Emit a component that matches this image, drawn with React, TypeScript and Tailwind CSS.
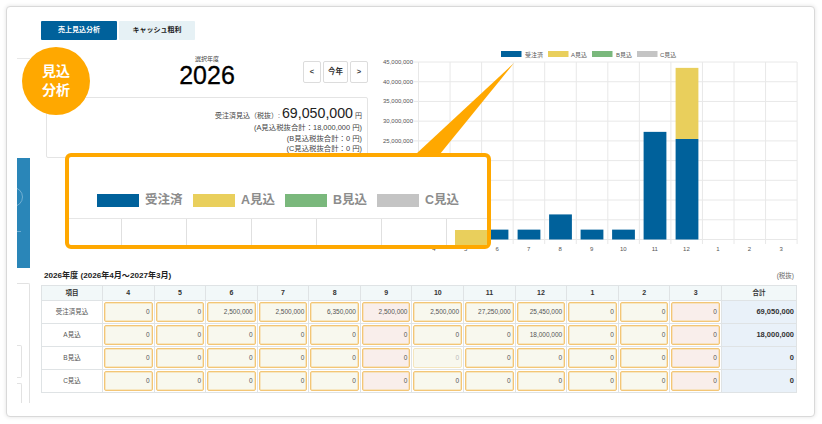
const font = { fontFamily: '"Liberation Sans", "Noto Sans CJK JP", sans-serif' };

const months = ['4', '5', '6', '7', '8', '9', '10', '11', '12', '1', '2', '3'];

const rows = [
  { label: '受注済見込', total: '69,050,000', values: ['0', '0', '2,500,000', '2,500,000', '6,350,000', '2,500,000', '2,500,000', '27,250,000', '25,450,000', '0', '0', '0'] },
  { label: 'A見込', total: '18,000,000', values: ['0', '0', '0', '0', '0', '0', '0', '0', '18,000,000', '0', '0', '0'] },
  { label: 'B見込', total: '0', values: ['0', '0', '0', '0', '0', '0', '0', '0', '0', '0', '0', '0'] },
  { label: 'C見込', total: '0', values: ['0', '0', '0', '0', '0', '0', '0', '0', '0', '0', '0', '0'] },
];

const BLUE = '#00619b';
const YELLOW = '#e9cf5c';
const axis = ['45,000,000', '40,000,000', '35,000,000', '30,000,000', '25,000,000', '20,000,000', '15,000,000', '10,000,000', '5,000,000', '0'];
const bars = [
  { x: 497, blue: 2.5, yellow: 0 },
  { x: 529, blue: 2.5, yellow: 0 },
  { x: 560.5, blue: 6.35, yellow: 0 },
  { x: 592, blue: 2.5, yellow: 0 },
  { x: 623.5, blue: 2.5, yellow: 0 },
  { x: 655, blue: 27.25, yellow: 0 },
  { x: 687, blue: 25.45, yellow: 18 },
];

function Chart() {
  const zero = 239.5;
  const perM = 3.95;
  const legend = [
    { x: 501, c: BLUE, t: '受注済', tx: 525 },
    { x: 548, c: YELLOW, t: 'A見込', tx: 571 },
    { x: 592, c: '#7ab87c', t: 'B見込', tx: 616 },
    { x: 637, c: '#c4c4c4', t: 'C見込', tx: 660 },
  ];
  return (
    <svg viewBox="380 40 420 230" className="w-[420px] h-[230px] shrink-0" style={font}>
      {legend.map((l) => (
        <g key={l.t}>
          <rect x={l.x} y={51} width={20.5} height={6} fill={l.c} />
          <text x={l.tx} y={56.5} fontSize={6} fill="#555">{l.t}</text>
        </g>
      ))}
      {axis.map((a, i) => {
        const y = 62 + i * 19.72;
        return (
          <g key={a}>
            <line x1={414} x2={797} y1={y} y2={y} stroke="#e8e8e8" />
            {a !== '0' && i < 5 && (
              <text x={413} y={y + 2} fontSize={6} fill="#555" textAnchor="end">{a}</text>
            )}
          </g>
        );
      })}
      {Array.from({ length: 13 }).map((_, i) => {
        const x = 418.5 + i * 31.55;
        return <line key={i} x1={x} x2={x} y1={62} y2={244} stroke="#e8e8e8" />;
      })}
      {bars.map((b) => (
        <g key={b.x}>
          <rect x={b.x - 11.4} y={zero - b.blue * perM} width={22.8} height={b.blue * perM} fill={BLUE} />
          {b.yellow > 0 && (
            <rect x={b.x - 11.4} y={zero - (b.blue + b.yellow) * perM} width={22.8} height={b.yellow * perM} fill={YELLOW} />
          )}
        </g>
      ))}
      {months.map((m, i) => (
        <text key={m} x={434 + i * 31.55} y={250.5} fontSize={6} fill="#555" textAnchor="middle">{m}</text>
      ))}
    </svg>
  );
}

function YearPanel() {
  return (
    <div className="ml-[5px] w-[322px] shrink-0">
      <div className="grid grid-cols-[1fr_auto_1fr] h-[57px] pt-[15px]">
        <div />
        <div className="flex flex-col items-center text-black">
          <div className="text-[6px] leading-[8px] text-[#444]">選択年度</div>
          <div className="text-[25px] leading-[24px] [-webkit-text-stroke:0.3px_black]">2026</div>
        </div>
        <div className="flex justify-end gap-[2px] h-[22px] mt-[6px]">
          {['<', '今年', '>'].map((t) => (
            <div
              key={t}
              className={`${t === '今年' ? 'w-[25px]' : 'w-[18px]'} flex items-center justify-center border border-[#dcdcdc] rounded-[2px] bg-white text-[7.5px] font-bold text-[#333]`}
            >
              {t}
            </div>
          ))}
        </div>
      </div>
      <div className="h-[61px] border border-[#e4e4e4] rounded-[2px] pr-[5px] pt-[7px] text-right text-[#444] text-[7.4px] leading-[10.5px]">
        <div className="h-[18px] flex items-baseline justify-end">
          <span className="text-[7px]">受注済見込（税抜）:</span>
          <span className="text-[14.2px] leading-[16px] mx-[2px] text-[#222]">69,050,000</span>
          <span className="text-[7px]">円</span>
        </div>
        <div>(A見込税抜合計：18,000,000 円)</div>
        <div>(B見込税抜合計：0 円)</div>
        <div>(C見込税抜合計：0 円)</div>
      </div>
    </div>
  );
}

function InputCell({ value, month, dim }: { value: string; month: string; dim: boolean }) {
  const red = month === '9' || month === '3';
  return (
    <div className="bg-white p-px">
      <div
        className={`h-full flex items-center justify-end pr-[2px] rounded-[2px] border text-[6.5px] ${red ? 'bg-[#f9eeeb]' : 'bg-[#f8f8ee]'} ${dim ? 'border-[#f5e6bd] text-[#bbb]' : 'border-[#f3c676] text-[#555] shadow-[inset_0_0_0_0.5px_#f6d596]'}`}
      >
        {value}
      </div>
    </div>
  );
}

function EstimateTable() {
  return (
    <div className="grid grid-cols-[60px_repeat(12,1fr)_74px] grid-rows-[14px_repeat(4,22px)] gap-px bg-[#dfe3e5] border border-[#dfe3e5] h-[108px]">
      <div className="bg-[#f2f8f9] flex items-center justify-center text-[6.5px] font-bold text-[#333]">項目</div>
      {months.map((m) => (
        <div key={m} className="bg-[#f2f8f9] flex items-center justify-center text-[7px] font-bold text-[#333]">{m}</div>
      ))}
      <div className="bg-[#f2f8f9] flex items-center justify-center text-[6.5px] font-bold text-[#333]">合計</div>
      {rows.map((row, r) => (
        <div key={row.label} className="contents">
          <div className="bg-white flex items-center justify-center text-[6.5px] text-[#555]">{row.label}</div>
          {row.values.map((v, i) => (
            <InputCell key={i} value={v} month={months[i]} dim={r === 2 && i === 6} />
          ))}
          <div className="bg-[#e9f1f9] flex items-center justify-end pr-[2px] text-[7.5px] font-bold text-[#333]">{row.total}</div>
        </div>
      ))}
    </div>
  );
}

function Callout() {
  const items = [
    { c: BLUE, t: '受注済', w: 'w-[38px]' },
    { c: YELLOW, t: 'A見込', w: 'w-[34px]' },
    { c: '#7ab87c', t: 'B見込', w: 'w-[34px]' },
    { c: '#c4c4c4', t: 'C見込', w: 'w-[34px]' },
  ];
  return (
    <>
      <svg className="absolute left-[403px] top-[56px] w-[105px] h-[92px]" viewBox="410 63 105 92">
        <polygon points="514,63 416,154 440,154" fill="#ffa800" />
      </svg>
      <div className="absolute left-[58px] top-[146px] w-[426px] h-[96px] border-4 border-[#ffa800] rounded-[6px] bg-white flex flex-col">
        <div className="h-[62px] border-b border-[#e6e6e6] flex items-end pb-[10px] pl-[28px] gap-[10px]">
          {items.map((it) => (
            <div key={it.t} className="flex items-center gap-[6px]">
              <div className="w-[42px] h-[13px]" style={{ backgroundColor: it.c }} />
              <span className={`${it.w} text-[12.5px] leading-[16px] font-bold text-[#8c8c8c] whitespace-nowrap`}>{it.t}</span>
            </div>
          ))}
        </div>
        <div className="flex-1 grid grid-cols-[53px_repeat(5,65px)_1fr]">
          {[0, 1, 2, 3, 4, 5].map((i) => (
            <div key={i} className="border-r border-[#e0e0e0]" />
          ))}
          <div className="flex items-end pl-[8px]">
            <div className="w-[32px] h-[15px]" style={{ backgroundColor: YELLOW }} />
          </div>
        </div>
      </div>
    </>
  );
}

export default function App() {
  return (
    <div className="w-[822px] h-[424px] bg-white overflow-hidden p-[6px]" style={font}>
      <div className="relative h-[411px] w-[809px] flex bg-white border border-[#d9d9d9] rounded-[4px] shadow-[0_0_4px_rgba(0,0,0,0.12)]">
        {/* cut-off sidebar of the original page */}
        <div className="ml-[10px] w-[13px] shrink-0 flex flex-col">
          <div className="mt-[51px] h-px bg-[#e8e8e8]" />
          <div className="mt-[99px] h-[110px] bg-[#2a86b8] overflow-hidden">
            <svg viewBox="0 0 13 110" className="w-[13px] h-[110px]">
              <circle cx="-4" cy="39" r="9.5" fill="none" stroke="#8fc0dc" strokeWidth="0.7" />
              <line x1="0" x2="4" y1="73.5" y2="73.5" stroke="#8fc0dc" strokeWidth="0.7" />
            </svg>
          </div>
          <div className="mt-[15px] h-[120px] border-t border-r border-[#e2e2e2] rounded-tr-[2px] pr-[7px] pt-[61px] flex flex-col gap-[5px]">
            <div className="h-[33px] border border-l-0 border-[#e2e2e2] rounded-r-[2px]" />
            <div className="h-[20px] border-t border-r border-[#e2e2e2] rounded-tr-[2px]" />
          </div>
        </div>

        <div className="ml-[11px] w-[756px] shrink-0 pt-[14px]">
          <div className="flex gap-[2px] h-[19px]">
            <div className="w-[76px] bg-[#00619b] rounded-[1px] flex items-center justify-center text-white text-[7px] font-bold">売上見込分析</div>
            <div className="w-[76px] bg-[#e6f1f5] rounded-[1px] flex items-center justify-center text-[#222] text-[7px] font-bold">キャッシュ粗利</div>
          </div>
          <div className="flex h-[229px] gap-[12px]">
            <YearPanel />
            <Chart />
          </div>
          <div className="flex justify-between items-center h-[15px] pl-[3px] pr-[3px] pb-[1px]">
            <span className="text-[8.1px] font-bold text-[#222]">2026年度 (2026年4月～2027年3月)</span>
            <span className="text-[6.5px] text-[#666]">(税抜)</span>
          </div>
          <div className="mt-[1px]">
            <EstimateTable />
          </div>
        </div>

        <Callout />
        <div className="absolute left-[15px] top-[40px] w-[68px] h-[68px] rounded-full bg-[#ffa800] flex items-center justify-center text-center text-white font-bold text-[14px] leading-[19px]">
          見込<br />分析
        </div>
      </div>
    </div>
  );
}
